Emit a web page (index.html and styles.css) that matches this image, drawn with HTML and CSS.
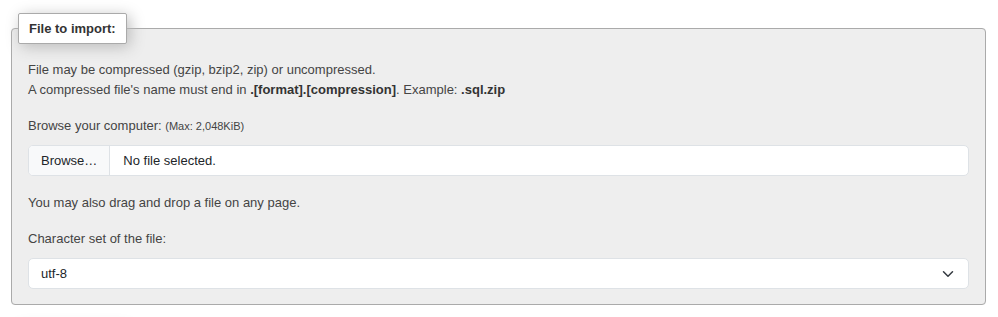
FILE: index.html
```html
<!DOCTYPE html>
<html>
<head>
<meta charset="utf-8">
<link rel="stylesheet" href="styles.css">
</head>
<body>
<div class="page">
  <fieldset class="box">
    <legend class="box-title">File to import:</legend>
    <p class="note">File may be compressed (gzip, bzip2, zip) or uncompressed.<br>A compressed file's name must end in <b>.[format].[compression]</b>. Example: <b>.sql.zip</b></p>
    <label class="label">Browse your computer: <small>(Max: 2,048KiB)</small></label>
    <div class="file-input">
      <span class="file-btn">Browse…</span>
      <span class="file-name">No file selected.</span>
    </div>
    <p class="note drag">You may also drag and drop a file on any page.</p>
    <label class="label">Character set of the file:</label>
    <div class="select">
      <span>utf-8</span>
      <svg class="chev" width="16" height="12" viewBox="0 0 16 16"><path d="m2 5 6 6 6-6" fill="none" stroke="#343a40" stroke-width="2" stroke-linecap="round" stroke-linejoin="round"/></svg>
    </div>
  </fieldset>
  <div class="next-title"></div>
</div>
</body>
</html>
```
FILE: styles.css
```css
html, body {
  margin: 0;
  padding: 0;
  background: #fff;
}
body {
  font-family: "Liberation Sans", Arial, sans-serif;
  font-size: 13px;
  color: #444;
  overflow: hidden;
}
.page {
  padding: 13px 12px 0 11px;
}
.box {
  margin: 0;
  border: 1px solid #aaa;
  border-radius: 4px;
  background: #eee;
  padding: 16px 16px 15px 16px;
  min-width: 0;
}
.box-title {
  font-weight: bold;
  color: #333;
  padding: 5px 10px;
  margin-left: -10px;
  line-height: 19px;
  border: 1px solid #aaa;
  border-radius: 2px;
  background: #fff;
  box-shadow: 3px 3px 15px #bbb;
}
.note {
  margin: 0 0 16px 0;
  line-height: 20px;
}
.note b {
  font-weight: bold;
  color: #333;
}
.label {
  display: block;
  line-height: 20px;
  margin-bottom: 9px;
}
.label small {
  font-size: 11px;
}
.file-input {
  display: flex;
  height: 31px;
  box-sizing: border-box;
  border: 1px solid #dee2e6;
  border-radius: 5px;
  background: #fff;
  overflow: hidden;
  margin-bottom: 17px;
  color: #212529;
  line-height: 29px;
}
.file-btn {
  padding: 0 12px;
  background: #f8f9fa;
  border-right: 1px solid #dee2e6;
}
.file-name {
  padding: 0 13px;
}
.select {
  display: flex;
  align-items: center;
  justify-content: space-between;
  height: 31px;
  box-sizing: border-box;
  border: 1px solid #dee2e6;
  border-radius: 5px;
  background: #fff;
  padding: 0 12px 0 12px;
  color: #212529;
}
.chev {
  display: block;
}
.next-title {
  width: 108px;
  height: 31px;
  margin: 21px 0 0 6px;
  box-sizing: border-box;
  border: 1px solid #aaa;
  border-radius: 2px;
  background: #fff;
  box-shadow: 3px 3px 15px #bbb;
}
```
